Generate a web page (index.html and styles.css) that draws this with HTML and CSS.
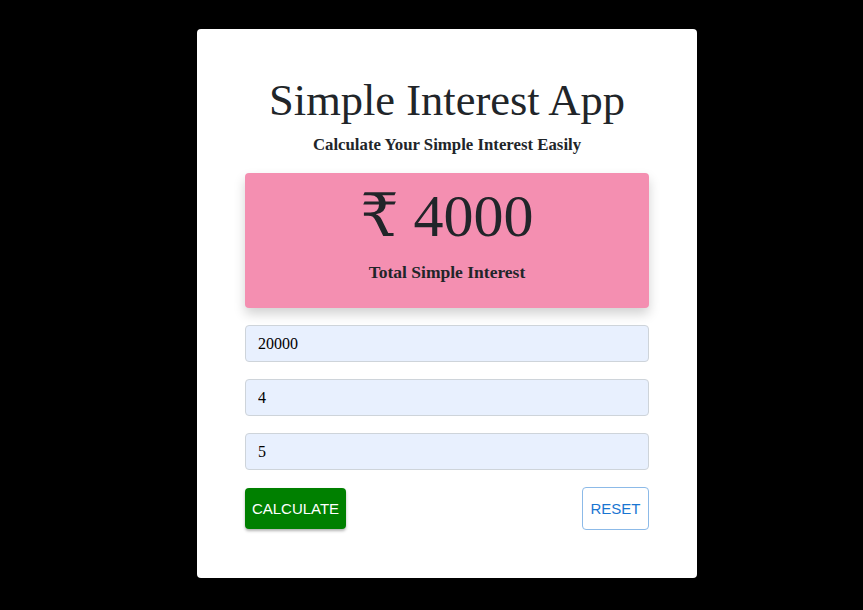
FILE: index.html
```html
<!DOCTYPE html>
<html>
<head>
<meta charset="utf-8">
<link rel="stylesheet" href="styles.css">
</head>
<body>
<div class="page">
  <div class="card">
    <h1 class="title">Simple Interest App</h1>
    <p class="subtitle">Calculate Your Simple Interest Easily</p>
    <div class="result">
      <div class="amount">₹ 4000</div>
      <div class="label">Total Simple Interest</div>
    </div>
    <form class="form">
      <input class="field" type="text" value="20000">
      <input class="field" type="text" value="4">
      <input class="field" type="text" value="5">
      <div class="actions">
        <button type="button" class="btn btn-calc">CALCULATE</button>
        <button type="button" class="btn btn-reset">RESET</button>
      </div>
    </form>
  </div>
</div>
</body>
</html>
```
FILE: styles.css
```css
html, body {
  margin: 0;
  padding: 0;
  background: #000;
  height: 100%;
}
.page {
  display: flex;
  justify-content: center;
  padding-top: 29px;
  padding-left: 31px;
}
.card {
  width: 500px;
  height: 549px;
  box-sizing: border-box;
  background: #fff;
  border-radius: 4px;
  padding: 42px 48px 0;
  font-family: "Liberation Serif", "DejaVu Serif", serif;
  color: #212529;
}
.title {
  margin: 0;
  text-align: center;
  font-weight: 400;
  font-size: 44.5px;
  line-height: 58px;
}
.subtitle {
  margin: 4px 0 0;
  text-align: center;
  font-weight: 700;
  font-size: 16.8px;
  line-height: 24px;
}
.result {
  margin-top: 16px;
  height: 135px;
  background: #f48fb1;
  border-radius: 4px;
  box-shadow: 0 6px 12px rgba(0,0,0,0.18);
  display: flex;
  flex-direction: column;
  align-items: center;
  padding-top: 12px;
  box-sizing: border-box;
}
.amount {
  font-size: 60px;
  line-height: 62px;
  color: #212529;
}
.label {
  margin-top: 13px;
  font-weight: 700;
  font-size: 17.5px;
  line-height: 24px;
}
.form {
  margin-top: 17px;
  display: flex;
  flex-direction: column;
  gap: 17px;
}
.field {
  height: 37px;
  box-sizing: border-box;
  border: 1px solid #ced4da;
  border-radius: 4px;
  background: #e8f0fe;
  padding: 0 12px;
  font-family: "Liberation Serif", "DejaVu Serif", serif;
  font-size: 16px;
  color: #000;
  outline: none;
}
.actions {
  display: flex;
  justify-content: space-between;
  align-items: center;
}
.btn {
  font-family: "Liberation Sans", Arial, sans-serif;
  font-size: 15px;
  border-radius: 4px;
  cursor: pointer;
  text-transform: uppercase;
}
.btn-calc {
  height: 41px;
  width: 101px;
  background: #008000;
  color: #fff;
  border: none;
  box-shadow: 0 2px 3px rgba(0,0,0,0.3);
  padding: 0;
}
.btn-reset {
  height: 43px;
  width: 67px;
  background: #fff;
  color: #1976d2;
  border: 1px solid #8cbae8;
  padding: 0;
}
```
